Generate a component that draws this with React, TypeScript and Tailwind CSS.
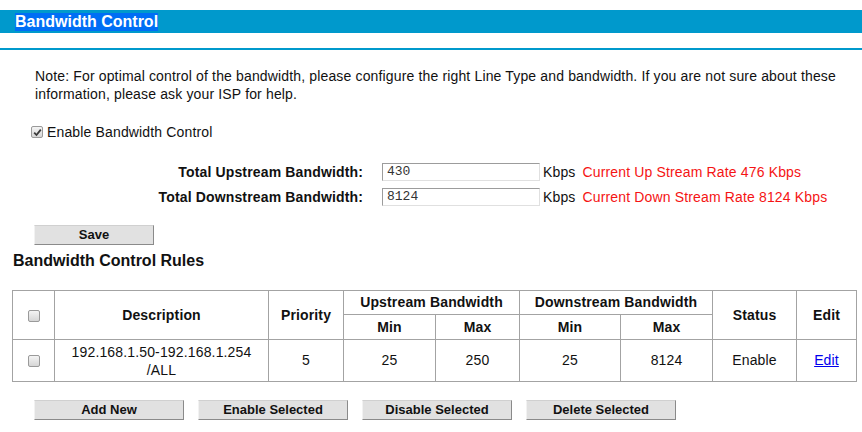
import React from "react";

const font = { fontFamily: '"Liberation Sans", Arial, sans-serif' };

function Box({ checked = false }: { checked?: boolean }) {
  return (
    <span className="inline-flex items-center justify-center w-[12px] h-[12px] rounded-[2px] border border-[#9a9a9a] bg-gradient-to-b from-[#f4f4f4] to-[#d6d6d6] align-middle">
      {checked && (
        <svg width="9" height="9" viewBox="0 0 9 9">
          <path d="M1.2 4.6 L3.5 7 L7.8 1.6" fill="none" stroke="#3a3a3a" strokeWidth="1.8" />
        </svg>
      )}
    </span>
  );
}

function Btn({ label, w }: { label: string; w: string }) {
  return (
    <button
      className={`${w} h-[20px] bg-[#e1e1e1] border border-t-[#d0d0d0] border-l-[#f2f2f2] border-b-[#8a8a8a] border-r-[#8a8a8a] text-[13px] font-bold text-[#111] leading-[18px] flex items-center justify-center`}
    >
      {label}
    </button>
  );
}

export default function App() {
  const th = "border border-[#a3a3a3] font-bold text-[14px] tracking-[0.15px] text-center p-0";
  const td = "border border-[#a3a3a3] text-[14px] tracking-[0.15px] text-center p-0";
  const inputCls =
    "ml-[19px] w-[158px] h-[18px] border border-t-[#9c9c9c] border-l-[#9c9c9c] border-b-[#e0e0e0] border-r-[#e0e0e0] px-[4px] text-[13px] text-[#333] outline-none";
  return (
    <div className="w-[862px] h-[432px] bg-white text-[#111] overflow-hidden" style={font}>
      <div className="pt-[10px]">
        <div className="h-[23px] bg-[#0099cc] flex items-center pl-[15px]">
          <span className="bg-[#006ef5] text-white font-bold text-[16px] leading-[18px]">
            Bandwidth Control
          </span>
        </div>
      </div>
      <div className="mt-[15px] h-[2px] bg-[#0099cc]" />

      <p className="mt-[17px] pl-[35px] text-[14px] tracking-[0.15px] leading-[18px]">
        Note: For optimal control of the bandwidth, please configure the right Line Type and bandwidth. If you are not sure about these
        information, please ask your ISP for help.
      </p>

      <div className="mt-[20px] pl-[31px] flex items-center h-[18px] text-[14px] tracking-[0.15px]">
        <Box checked />
        <span className="ml-[4px]">Enable Bandwidth Control</span>
      </div>

      <div className="mt-[22px] flex items-center h-[18px] text-[14px] tracking-[0.15px]">
        <span className="w-[363px] text-right font-bold">Total Upstream Bandwidth:</span>
        <input
          readOnly
          value="430"
          className={inputCls}
          style={{ fontFamily: '"Liberation Mono", "Courier New", monospace', letterSpacing: 0 }}
        />
        <span className="ml-[3px]">Kbps</span>
        <span className="ml-[7px] text-[#f51414]">Current Up Stream Rate 476 Kbps</span>
      </div>
      <div className="mt-[7px] flex items-center h-[18px] text-[14px] tracking-[0.15px]">
        <span className="w-[363px] text-right font-bold">Total Downstream Bandwidth:</span>
        <input
          readOnly
          value="8124"
          className={inputCls}
          style={{ fontFamily: '"Liberation Mono", "Courier New", monospace', letterSpacing: 0 }}
        />
        <span className="ml-[3px]">Kbps</span>
        <span className="ml-[7px] text-[#f51414]">Current Down Stream Rate 8124 Kbps</span>
      </div>

      <div className="mt-[19px] pl-[34px]">
        <Btn label="Save" w="w-[120px]" />
      </div>

      <div className="mt-[7px] pl-[13px] text-[16px] leading-[18px] font-bold">Bandwidth Control Rules</div>

      <div className="mt-[20px] pl-[12px]">
        <table className="border-collapse w-[844px] table-fixed">
          <colgroup>
            <col className="w-[42px]" />
            <col className="w-[214px]" />
            <col className="w-[75px]" />
            <col className="w-[92px]" />
            <col className="w-[84px]" />
            <col className="w-[101px]" />
            <col className="w-[92px]" />
            <col className="w-[84px]" />
            <col className="w-[60px]" />
          </colgroup>
          <thead>
            <tr className="h-[24px]">
              <th rowSpan={2} className={th}>
                <Box />
              </th>
              <th rowSpan={2} className={th}>Description</th>
              <th rowSpan={2} className={th}>Priority</th>
              <th colSpan={2} className={th}>Upstream Bandwidth</th>
              <th colSpan={2} className={th}>Downstream Bandwidth</th>
              <th rowSpan={2} className={th}>Status</th>
              <th rowSpan={2} className={th}>Edit</th>
            </tr>
            <tr className="h-[25px]">
              <th className={th}>Min</th>
              <th className={th}>Max</th>
              <th className={th}>Min</th>
              <th className={th}>Max</th>
            </tr>
          </thead>
          <tbody>
            <tr className="h-[42px]">
              <td className={td}>
                <Box />
              </td>
              <td className={`${td} leading-[18px]`}>
                192.168.1.50-192.168.1.254
                <br />
                /ALL
              </td>
              <td className={td}>5</td>
              <td className={td}>25</td>
              <td className={td}>250</td>
              <td className={td}>25</td>
              <td className={td}>8124</td>
              <td className={td}>Enable</td>
              <td className={td}>
                <a className="text-[#0000ee] underline" href="#">
                  Edit
                </a>
              </td>
            </tr>
          </tbody>
        </table>
      </div>

      <div className="mt-[18px] pl-[34px] flex gap-[14px]">
        <Btn label="Add New" w="w-[150px]" />
        <Btn label="Enable Selected" w="w-[150px]" />
        <Btn label="Disable Selected" w="w-[150px]" />
        <Btn label="Delete Selected" w="w-[150px]" />
      </div>
    </div>
  );
}
